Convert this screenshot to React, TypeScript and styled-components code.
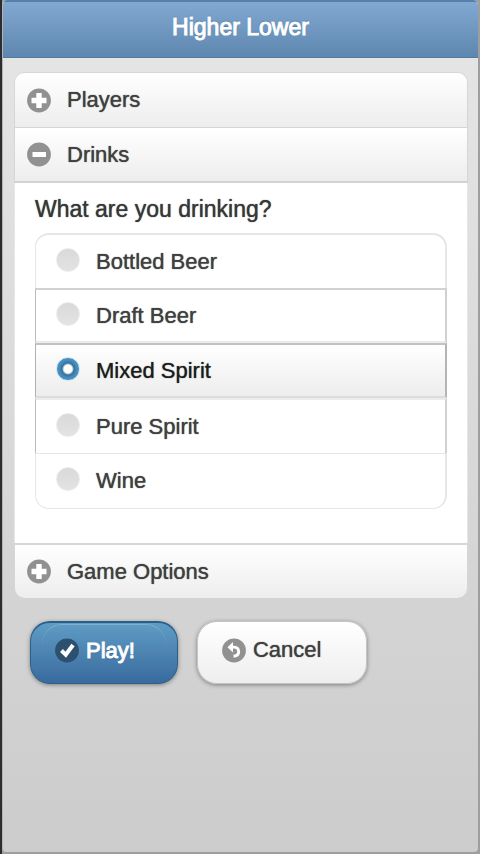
import React, { useState } from "react";
import styled, { createGlobalStyle, css } from "styled-components";

const GlobalStyle = createGlobalStyle`
  * { box-sizing: border-box; }
  body {
    margin: 0;
    background: #303234;
    font-family: "Liberation Sans", Arial, sans-serif;
    font-size: 22px;
    line-height: 26px;
    color: #404040;
  }
  button, input, fieldset, legend { font: inherit; color: inherit; }
`;

const Frame = styled.div`
  min-height: 100vh;
  display: flex;
  background: #9b9f9f;
  border-left: 2px solid #2b2d30;
  padding: 0 2px 2px 0;
`;

const Page = styled.div`
  flex: 1;
  min-width: 0;
  border-left: 1px solid #b4b4b4;
  border-radius: 5px 5px 4px 4px;
  overflow: hidden;
  background: linear-gradient(#e6e6e6, #cccccc);
`;

const Header = styled.header`
  height: 58px;
  padding-top: 12px;
  border-top: 2px solid #5680aa;
  border-bottom: 1px solid #5079a5;
  background: linear-gradient(#81a8d0, #5e87b0);
  text-align: center;
`;

const Title = styled.h1`
  margin: 0;
  font-size: 23px;
  font-weight: normal;
  line-height: 26px;
  color: #fff;
  -webkit-text-stroke: 1px #fff;
  text-shadow: 0 -1px 1px #3e6790;
`;

const Main = styled.main`
  padding: 14px 10px 14px 11px;
`;

const Accordion = styled.div`
  border-radius: 10px;
  overflow: hidden;
`;

const SectionButton = styled.button<{ $place: "first" | "middle" | "last" }>`
  display: flex;
  align-items: center;
  gap: 15px;
  width: 100%;
  height: 55px;
  padding: 0 12px;
  border: 1px solid #d6d6d6;
  border-bottom-width: 0;
  background: linear-gradient(#fff, #ededed);
  text-align: left;
  text-shadow: 0 0 1px #3c3c3c;
  ${(p) => p.$place === "first" && css`border-radius: 10px 10px 0 0;`}
  ${(p) =>
    p.$place === "middle" &&
    css`
      height: 56px;
      border-bottom: 2px solid #d2d2d2;
    `}
  ${(p) =>
    p.$place === "last" &&
    css`
      border-top-width: 2px;
      border-radius: 0 0 10px 10px;
    `}
`;

const Panel = styled.div`
  padding: 13px 20px 34px;
  border: solid #e6e6e6;
  border-width: 0 1px;
  background: #fff;
`;

const Group = styled.fieldset`
  margin: 0;
  padding: 0;
  border: 0;
  min-width: 0;
`;

const Legend = styled.legend`
  padding: 0;
  margin-bottom: 11px;
  font-size: 23px;
  color: #383838;
  text-shadow: 0 0 1px #383838;
`;

type Tone = "first" | "mid" | "active" | "after" | "last";

const tones = {
  first: css`
    border-width: 2px 2px 0 1px;
    border-radius: 14px 14px 0 0;
  `,
  mid: css`
    border-width: 2px 2px 2px 1px;
    border-color: #d2d2d2 #d0d0d0 #ebebeb #bbb;
  `,
  active: css`
    border-width: 2px 2px 2px 1px;
    border-color: #c2c2c2 #b4b4b4 #dcdcdc #b0b0b0;
    background: linear-gradient(#fff, #ededed);
    color: #1c1c1c;
  `,
  after: css`
    border-width: 2px 2px 0 1px;
    border-color: #ebebeb #d0d0d0 #ebebeb #bbb;
  `,
  last: css`
    height: 56px;
    border-width: 1px 2px 1px 1px;
    border-radius: 0 0 14px 14px;
  `,
};

const Option = styled.label<{ $tone: Tone }>`
  display: flex;
  align-items: center;
  gap: 16px;
  height: 55px;
  padding: 0 20px;
  border: solid #e6e6e6;
  text-shadow: 0 0 1px #3c3c3c;
  ${(p) => tones[p.$tone]}
`;

const Radio = styled.input`
  appearance: none;
  flex: none;
  width: 24px;
  height: 24px;
  margin: 0 0 4px;
  border-radius: 50%;
  border: 1px solid #ececec;
  background: linear-gradient(#d9d9d9, #e3e3e3);
  &:checked {
    border-color: #d5e5f0;
    background: radial-gradient(circle, #fff 4px, #3b6f96 6px, #4190c4 9px);
  }
`;

const Actions = styled.div`
  display: flex;
  gap: 19px;
  padding: 23px 16px;
`;

const ActionButton = styled.button<{ $primary?: boolean }>`
  position: relative;
  display: flex;
  align-items: center;
  gap: 6px;
  height: 63px;
  border-radius: 20px;
  padding: 0 45px 5px 24px;
  border: 1px solid #c4c4c4;
  background: linear-gradient(#fff, #eeeeee);
  box-shadow: 0 1px 4px rgba(0, 0, 0, 0.4);
  text-shadow: 0 0 1px #3c3c3c;
  ${(p) =>
    p.$primary &&
    css`
      padding-right: 42px;
      border-color: #2c5f86;
      border-top-width: 2px;
      background: linear-gradient(#5f9cc5, #396b9e);
      color: #fff;
      -webkit-text-stroke: 1px #fff;
      text-shadow: 0 1px 1px #194b7e;
      &::before {
        content: "";
        position: absolute;
        inset: 1px 11px auto;
        height: 20px;
        border-top: 1px solid rgba(255, 255, 255, 0.22);
        border-radius: 20px 20px 0 0;
      }
    `}
`;

const Glyph = styled.svg`
  flex: none;
  display: block;
  width: 25px;
  height: 25px;
`;

type IconName = "plus" | "minus" | "check" | "back";

function Icon({ name }: { name: IconName }) {
  return (
    <Glyph viewBox="0 0 25 25" aria-hidden="true" fill="none" stroke="#fff">
      <circle cx="12" cy="12.5" r="11.9" fill={name === "check" ? "#2d506f" : "#919191"} stroke="none" />
      {name === "plus" && <path d="M4.5 12.5H19.5M12 5V20" strokeWidth="5.4" />}
      {name === "minus" && <path d="M5.5 12.5H19" strokeWidth="5" />}
      {name === "check" && <path d="M6.5 12.5L10.8 16.8L18 7" strokeWidth="4" />}
      {name === "back" && (
        <>
          <path d="M10 9.2H12.5A4.5 4.5 0 0 1 13.5 18H11.5" strokeWidth="2.8" />
          <path d="M5.5 9.2L11 4V14.4Z" fill="#fff" stroke="none" />
        </>
      )}
    </Glyph>
  );
}

const drinks = ["Bottled Beer", "Draft Beer", "Mixed Spirit", "Pure Spirit", "Wine"];

function toneFor(index: number, selected: number): Tone {
  if (index === 0) return "first";
  if (index === drinks.length - 1) return "last";
  if (index === selected) return "active";
  return index === selected + 1 ? "after" : "mid";
}

export default function App() {
  const [drink, setDrink] = useState("Mixed Spirit");
  const [open, setOpen] = useState(true);
  return (
    <>
      <GlobalStyle />
      <Frame>
        <Page>
          <Header>
            <Title>Higher Lower</Title>
          </Header>
          <Main>
            <Accordion>
              <SectionButton type="button" $place="first" aria-expanded={false}>
                <Icon name="plus" />
                Players
              </SectionButton>
              <SectionButton type="button" $place="middle" aria-expanded={open} onClick={() => setOpen(!open)}>
                <Icon name={open ? "minus" : "plus"} />
                Drinks
              </SectionButton>
              {open && (
                <Panel>
                  <Group>
                    <Legend>What are you drinking?</Legend>
                    {drinks.map((name, i) => (
                      <Option key={name} $tone={toneFor(i, drinks.indexOf(drink))}>
                        <Radio
                          type="radio"
                          name="drink"
                          value={name}
                          checked={name === drink}
                          onChange={() => setDrink(name)}
                        />
                        {name}
                      </Option>
                    ))}
                  </Group>
                </Panel>
              )}
              <SectionButton type="button" $place="last" aria-expanded={false}>
                <Icon name="plus" />
                Game Options
              </SectionButton>
            </Accordion>
            <Actions>
              <ActionButton type="button" $primary>
                <Icon name="check" />
                Play!
              </ActionButton>
              <ActionButton type="button">
                <Icon name="back" />
                Cancel
              </ActionButton>
            </Actions>
          </Main>
        </Page>
      </Frame>
    </>
  );
}
